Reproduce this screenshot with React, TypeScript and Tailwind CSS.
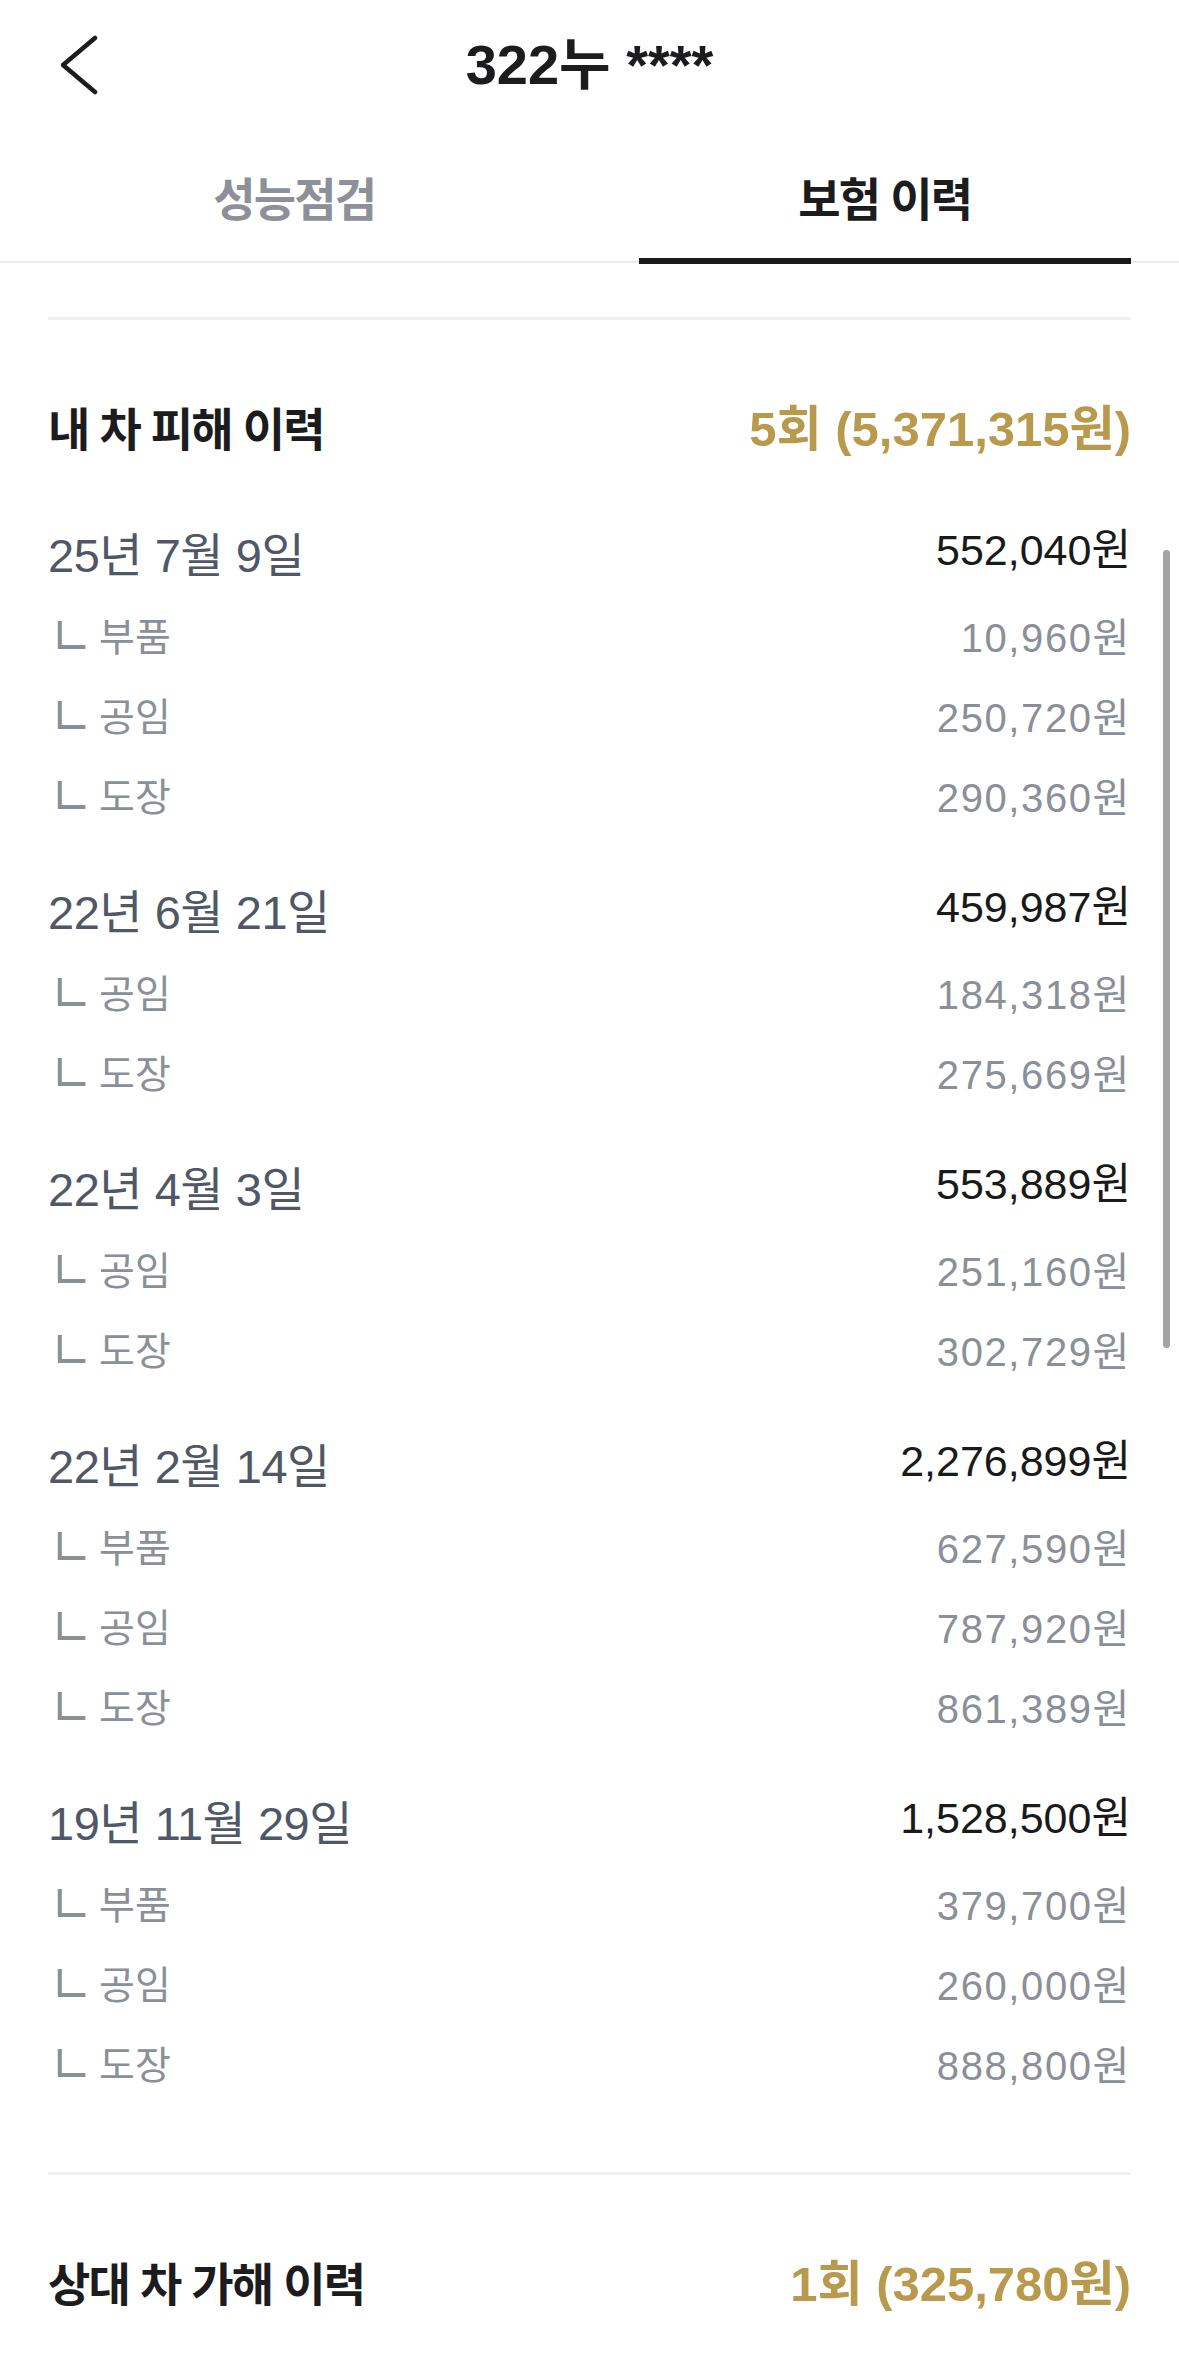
const damages = [
  {
    date: "25년 7월 9일",
    total: "552,040원",
    items: [
      ["부품", "10,960원"],
      ["공임", "250,720원"],
      ["도장", "290,360원"],
    ],
  },
  {
    date: "22년 6월 21일",
    total: "459,987원",
    items: [
      ["공임", "184,318원"],
      ["도장", "275,669원"],
    ],
  },
  {
    date: "22년 4월 3일",
    total: "553,889원",
    items: [
      ["공임", "251,160원"],
      ["도장", "302,729원"],
    ],
  },
  {
    date: "22년 2월 14일",
    total: "2,276,899원",
    items: [
      ["부품", "627,590원"],
      ["공임", "787,920원"],
      ["도장", "861,389원"],
    ],
  },
  {
    date: "19년 11월 29일",
    total: "1,528,500원",
    items: [
      ["부품", "379,700원"],
      ["공임", "260,000원"],
      ["도장", "888,800원"],
    ],
  },
];

function BackIcon() {
  return (
    <svg width="40" height="60" viewBox="0 0 40 60" fill="none">
      <polyline
        points="34,3 2,30 34,57"
        stroke="#1c1c1e"
        strokeWidth="4.5"
        strokeLinecap="round"
        strokeLinejoin="round"
      />
    </svg>
  );
}

function SectionHeader({ title, summary }: { title: string; summary: string }) {
  return (
    <div className="pt-[80px]">
      <div className="flex h-[60px] items-center justify-between">
        <span className="text-[46px] font-bold tracking-[-0.04em] text-[#1c1c1e]">
          {title}
        </span>
        <span className="text-[49px] font-bold text-[#b9994b]">{summary}</span>
      </div>
    </div>
  );
}

function DamageGroup({ date, total, items }: (typeof damages)[number]) {
  return (
    <div className="mb-[33px]">
      <div className="flex h-[84px] items-center justify-between">
        <span className="text-[47px] tracking-[-0.01em] text-[#505767]">{date}</span>
        <span className="mb-[12px] text-[43px] text-[#1a1a1a]">{total}</span>
      </div>
      {items.map(([label, amount]) => (
        <div key={label} className="flex h-[80px] items-center justify-between text-[39px] text-[#8b8f98]">
          <span className="flex items-center">
            <span className="ml-[1px] inline-block w-[50px] scale-y-125 text-[48px] leading-none">ㄴ</span>
            <span>{label}</span>
          </span>
          <span className="text-[40px] tracking-[0.04em]">{amount}</span>
        </div>
      ))}
    </div>
  );
}

export default function App() {
  return (
    <div className="relative min-h-[2379px] overflow-hidden bg-white font-['Liberation_Sans','Noto_Sans_CJK_KR',sans-serif]">
      {/* header */}
      <div className="grid h-[130px] grid-cols-[1fr_auto_1fr] items-center">
        <div className="pl-[61px]">
          <BackIcon />
        </div>
        <h1 className="text-[56px] font-bold leading-none text-[#1c1c1e]">322누 ****</h1>
        <div />
      </div>

      {/* tabs */}
      <div className="grid h-[133px] grid-cols-2 gap-[98px] border-b-2 border-[#ebebeb] px-[48px]">
        <div className="flex justify-center pt-[36px]">
          <span className="text-[46px] font-bold tracking-[-0.04em] text-[#8d9099]">성능점검</span>
        </div>
        <div className="relative flex justify-center pt-[36px]">
          <span className="text-[46px] font-bold tracking-[-0.04em] text-[#1c1c1e]">보험 이력</span>
          <div className="absolute inset-x-0 -bottom-[3px] h-[6px] bg-[#1a1a1a]" />
        </div>
      </div>

      <div className="px-[48px] pb-[80px]">
        <div className="mt-[54px] h-[3px] bg-[#f0f0f0]" />

        <SectionHeader title="내 차 피해 이력" summary="5회 (5,371,315원)" />

        <div className="mt-[54px]">
          {damages.map((g) => (
            <DamageGroup key={g.date} {...g} />
          ))}
        </div>

        <div className="mt-[66px] h-[3px] bg-[#f0f0f0]" />

        <SectionHeader title="상대 차 가해 이력" summary="1회 (325,780원)" />
      </div>

      {/* scroll indicator */}
      <div className="absolute right-[9px] top-[550px] h-[798px] w-[7px] rounded-full bg-[#a3a3a3]" />
    </div>
  );
}
